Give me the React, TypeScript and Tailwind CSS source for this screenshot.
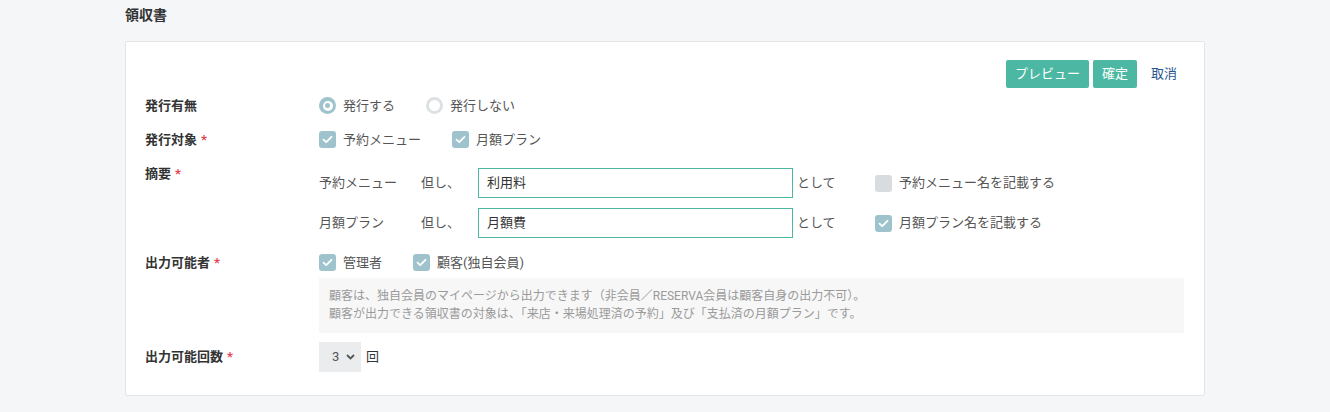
const font = "font-['Roboto','Noto_Sans_CJK_JP',sans-serif]";

function Check({ on = true }: { on?: boolean }) {
  return (
    <span
      className={
        "flex h-[17px] w-[17px] shrink-0 items-center justify-center rounded-[3px] " +
        (on ? "bg-[#9ec3cc]" : "bg-[#d8dcdf]")
      }
    >
      {on && (
        <svg width="11" height="9" viewBox="0 0 11 9" fill="none">
          <path d="M1.5 4.6 4.2 7.2 9.5 1.8" stroke="white" strokeWidth="1.8" strokeLinecap="round" strokeLinejoin="round" />
        </svg>
      )}
    </span>
  );
}

function Radio({ on }: { on: boolean }) {
  return on ? (
    <span className="flex h-[17px] w-[17px] items-center justify-center rounded-full bg-[#9ec3cc]">
      <span className="flex h-[10px] w-[10px] items-center justify-center rounded-full bg-white">
        <span className="h-[5px] w-[5px] rounded-full bg-[#9ec3cc]" />
      </span>
    </span>
  ) : (
    <span className="h-[17px] w-[17px] rounded-full border-[3px] border-[#dde1e3] bg-white" />
  );
}

function Label({ text, req }: { text: string; req?: boolean }) {
  return (
    <div className="w-[174px] shrink-0 text-[13px] font-bold text-[#333]">
      {text}
      {req && <span className="ml-1 text-[#e0454f]">*</span>}
    </div>
  );
}

function SummaryRow({ name, value, checked, cbLabel }: { name: string; value: string; checked: boolean; cbLabel: string }) {
  return (
    <div className="flex h-[30px] items-center text-[13px] text-[#555]">
      <span className="w-[102px]">{name}</span>
      <span className="w-[57px]">但し、</span>
      <div className="flex h-[30px] w-[315px] items-center border border-[#4cb8a4] px-2 text-[#333]">{value}</div>
      <span className="ml-1 w-[78px]">として</span>
      <span className="flex items-center gap-[7px]">
        <Check on={checked} />
        {cbLabel}
      </span>
    </div>
  );
}

export default function App() {
  return (
    <div className={"min-h-[412px] bg-[#f5f6f8] pl-[125px] pr-[125px] " + font}>
      <div className="pt-[5px] pb-[16px] text-[14px] font-bold leading-[20px] text-[#333]">領収書</div>
      <div className="h-[355px] rounded-[2px] border border-[#e3e5e8] bg-white px-[19px] pt-[18px]">
        <div className="flex justify-end gap-1 pr-[4px]">
          <div className="flex h-[28px] items-center rounded-[2px] bg-[#4cb8a4] px-[9px] text-[13px] text-white">プレビュー</div>
          <div className="flex h-[28px] items-center rounded-[2px] bg-[#4cb8a4] px-[9px] text-[13px] text-white">確定</div>
          <div className="flex h-[28px] items-center pl-[10px] pr-[4px] text-[13px] text-[#27568f]">取消</div>
        </div>

        <div className="mt-[8px] flex items-center">
          <Label text="発行有無" />
          <div className="flex items-center text-[13px] text-[#555]">
            <span className="flex w-[107px] items-center gap-[7px]"><Radio on />発行する</span>
            <span className="flex items-center gap-[7px]"><Radio on={false} />発行しない</span>
          </div>
        </div>

        <div className="mt-[14px] flex items-center">
          <Label text="発行対象" req />
          <div className="flex items-center text-[13px] text-[#555]">
            <span className="flex w-[133px] items-center gap-[7px]"><Check />予約メニュー</span>
            <span className="flex items-center gap-[7px]"><Check />月額プラン</span>
          </div>
        </div>

        <div className="mt-[19px] flex items-start">
          <div className="-mt-[4px]"><Label text="摘要" req /></div>
          <div className="flex flex-col gap-[10px]">
            <SummaryRow name="予約メニュー" value="利用料" checked={false} cbLabel="予約メニュー名を記載する" />
            <SummaryRow name="月額プラン" value="月額費" checked cbLabel="月額プラン名を記載する" />
          </div>
        </div>

        <div className="mt-[15px] flex items-start">
          <Label text="出力可能者" req />
          <div className="flex-1">
            <div className="flex items-center text-[13px] text-[#555]">
              <span className="flex w-[94px] items-center gap-[7px]"><Check />管理者</span>
              <span className="flex items-center gap-[7px]"><Check />顧客(独自会員)</span>
            </div>
            <div className="mt-[5px] mr-[1px] bg-[#f7f7f7] px-[10px] pt-[9px] pb-[10px] text-[12px] leading-[18px] text-[#9a9a9a]">
              <div>顧客は、独自会員のマイページから出力できます（非会員／RESERVA会員は顧客自身の出力不可）。</div>
              <div>顧客が出力できる領収書の対象は、「来店・来場処理済の予約」及び「支払済の月額プラン」です。</div>
            </div>
          </div>
        </div>

        <div className="mt-[9px] flex items-center">
          <Label text="出力可能回数" req />
          <div className="flex items-center text-[13px] text-[#555]">
            <div className="flex h-[30px] w-[42px] items-center justify-between bg-[#ebeced] pl-[13px] pr-[6px]">
              <span>3</span>
              <svg width="9" height="6" viewBox="0 0 9 6" fill="none">
                <path d="M1 1l3.5 3.5L8 1" stroke="#555" strokeWidth="1.8" />
              </svg>
            </div>
            <span className="ml-[5px] text-[#333]">回</span>
          </div>
        </div>
      </div>
    </div>
  );
}
